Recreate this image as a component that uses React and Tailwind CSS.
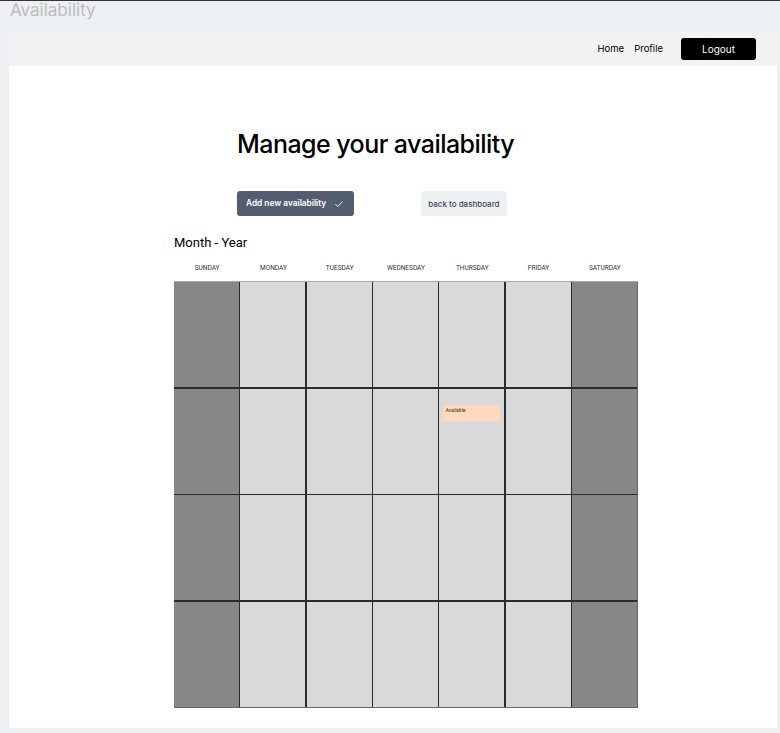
import React from 'react';

const days = ['SUNDAY', 'MONDAY', 'TUESDAY', 'WEDNESDAY', 'THURSDAY', 'FRIDAY', 'SATURDAY'];

const App = () => {
  // 4 weeks x 7 days, one slot marked available on the second thursday
  const weeks = [0, 1, 2, 3];

  return (
    <div className="min-h-[733px] bg-[#edf0f3] border-t border-[#333]" style={{ fontFamily: 'Inter, "Liberation Sans", sans-serif' }}>
      <h1 className="pl-[10px] h-[31px] text-[17px] leading-[18px] text-[#bdbdbd]">Availability</h1>

      <div className="ml-[9px] w-[768px] bg-white">
        {/* top nav */}
        <div className="h-[34px] bg-[#f2f2f2] flex items-center justify-end pr-[21px]">
          <a className="text-[9.5px] text-black mr-[10px]">Home</a>
          <a className="text-[9.5px] text-black mr-[18px]">Profile</a>
          <button className="w-[75px] h-[22px] bg-black text-white text-[10px] rounded-[3px]">Logout</button>
        </div>

        <div className="h-[662px] pt-[62px]">
          <div className="pl-[228px]">
            <h2 className="text-[25px] leading-[32px] font-medium text-black tracking-[-0.55px]">Manage your availability</h2>

            <div className="flex items-center mt-[31px]">
              <button className="flex items-center h-[25px] pl-[9px] pr-[10px] bg-[#535d70] text-white text-[8.3px] leading-none font-semibold rounded-[3px]">
                Add new availability
                <svg className="ml-[8px]" width="10" height="10" viewBox="0 0 24 24" fill="none" stroke="currentColor" strokeWidth="2.2" strokeLinecap="round" strokeLinejoin="round">
                  <path d="M4 13l5 5L20 7" />
                </svg>
              </button>
              <button className="ml-[67px] h-[25px] px-[7px] bg-[#eef1f4] text-[#3d4452] text-[8px] font-medium rounded-[3px]">back to dashboard</button>
            </div>
          </div>

          <div className="pl-[165px] mt-[15px]" style={{ fontFamily: 'Roboto, "Liberation Sans", sans-serif' }}>
            <div className="text-[13px] leading-[24px] text-black">Month - Year</div>

            <div className="grid grid-cols-7 w-[464px] h-[18px] mt-[5px] items-center">
              {days.map((d) => (
                <div key={d} className="text-center text-[6.5px] text-[#333]">{d}</div>
              ))}
            </div>

            <div className="mt-[3px] w-[464px] border-t border-[#aaa]">
              <div className="grid grid-cols-7 grid-rows-[repeat(4,105px)] gap-[1.5px] bg-[#2b2b2b] border-r border-b border-[#666]">
                {weeks.map((w) =>
                  days.map((d, i) => {
                    const weekend = i === 0 || i === 6;
                    return (
                      <div key={`${w}-${d}`} className={`${weekend ? 'bg-[#878787]' : 'bg-[#d9d9d9]'} relative`}>
                        {w === 1 && i === 4 && (
                          <div className="ml-[4px] mr-[4px] mt-[16px] h-[16px] bg-[#fed9bd] text-[5px] text-[#333] px-[2px] pt-[2px]">Available</div>
                        )}
                      </div>
                    );
                  })
                )}
              </div>
            </div>
          </div>
        </div>
      </div>
    </div>
  );
};

export default App;
